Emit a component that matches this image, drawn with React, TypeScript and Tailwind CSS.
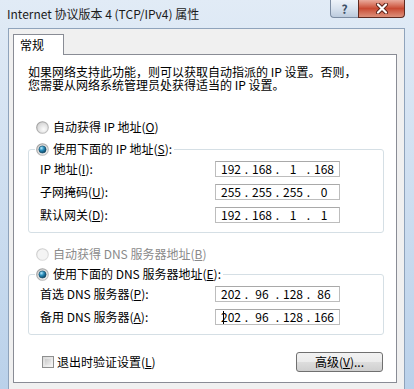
import React from "react";

type RadioProps = { checked?: boolean; disabled?: boolean };

const Radio = ({ checked, disabled }: RadioProps) => (
  <svg width="13" height="13" viewBox="0 0 13 13" className="shrink-0">
    <defs>
      <linearGradient id="rb-ring" x1="0" y1="0" x2="1" y2="1">
        <stop offset="0" stopColor="#9a9a9a" />
        <stop offset="1" stopColor="#c4c4c4" />
      </linearGradient>
      <linearGradient id="rb-ring-dis" x1="0" y1="0" x2="1" y2="1">
        <stop offset="0" stopColor="#c8c8c8" />
        <stop offset="1" stopColor="#e0e0e0" />
      </linearGradient>
      <radialGradient id="rb-fill" cx="0.6" cy="0.65" r="0.6">
        <stop offset="0" stopColor="#fcfcfc" />
        <stop offset="1" stopColor="#d6d6d6" />
      </radialGradient>
      <radialGradient id="rb-dot" cx="0.35" cy="0.3" r="0.75">
        <stop offset="0" stopColor="#b8ecff" />
        <stop offset="0.45" stopColor="#2a8dbb" />
        <stop offset="1" stopColor="#0b3f5c" />
      </radialGradient>
    </defs>
    <circle
      cx="6.5"
      cy="6.5"
      r="5.8"
      fill={disabled ? "#f4f4f4" : "url(#rb-fill)"}
      stroke={disabled ? "url(#rb-ring-dis)" : "url(#rb-ring)"}
      strokeWidth="1.1"
    />
    {checked && <circle cx="6.5" cy="6.5" r="3.6" fill="url(#rb-dot)" stroke="#0e4763" strokeWidth="0.6" />}
  </svg>
);

const IpField = ({ parts, caret }: { parts: string[]; caret?: boolean }) => (
  <div className="relative flex items-center w-[125px] h-[16px] border border-[#bdbdbd] border-t-[#a9a9a9] bg-white pl-[2px] leading-[14px]">
    {caret && <span className="absolute left-[7px] top-[1px] w-px h-[13px] bg-black" />}
    {parts.map((p, i) => (
      <React.Fragment key={i}>
        <span className="w-[26px] text-center">{p}</span>
        {i < 3 && <span className="w-[5px] text-center">.</span>}
      </React.Fragment>
    ))}
  </div>
);

const Row = ({ label, children }: { label: React.ReactNode; children: React.ReactNode }) => (
  <div className="grid grid-cols-[175px_125px] items-center h-[16px]">
    <span className="whitespace-nowrap leading-[16px]">{label}</span>
    {children}
  </div>
);

const Key = ({ k }: { k: string }) => <u className="underline-offset-[1px]">{k}</u>;

const App = () => {
  return (
    <div className="w-[414px] h-[389px] overflow-hidden flex flex-col bg-gradient-to-b from-[#e1ebf6] to-[#bad1ea] font-['Noto_Sans_CJK_SC',sans-serif] text-[12px] text-black">
      {/* title bar */}
      <div className="h-[28px] shrink-0 flex items-start justify-between pl-[7px] pr-[9px]">
        <div className="mt-[6px] leading-[16px] text-[#1b1b1b] whitespace-nowrap">Internet 协议版本 4 (TCP/IPv4) 属性</div>
        <div className="flex">
          <div className="w-[28px] h-[18px] flex items-center justify-center border border-t-0 border-r-0 border-[#7c8ca2] rounded-bl-[4px] bg-gradient-to-b from-[#eef3f9] via-[#d8e2ee] to-[#bccbdd] text-[#3c4f66] text-[12px] font-bold leading-none">
            ?
          </div>
          <div className="w-[47px] h-[18px] flex items-center justify-center border border-t-0 border-[#5f2a20] rounded-br-[4px] bg-gradient-to-b from-[#e9aa9c] via-[#c84a33] to-[#dc8f7a]">
            <svg width="14" height="11" viewBox="0 0 14 11">
              <path d="M3 1.5 L11 9.5 M11 1.5 L3 9.5" stroke="#5a2118" strokeWidth="4" strokeLinecap="round" />
              <path d="M3 1.5 L11 9.5 M11 1.5 L3 9.5" stroke="#ffffff" strokeWidth="2.2" strokeLinecap="round" />
            </svg>
          </div>
        </div>
      </div>

      {/* client area */}
      <div className="flex-1 ml-[8px] mr-[9px] border-l border-t border-r border-[#8fa3bb] bg-[#f0f0f0] pt-[5px] pl-[4px] pr-[7px]">
        <div className="flex">
          <div className="relative z-10 -mb-px w-[51px] h-[21px] border border-b-0 border-[#898c95] bg-white pl-[6px] leading-[20px]">
            常规
          </div>
        </div>
        <div className="h-[329px] border border-[#898c95] bg-white pl-[14px] pr-[12px]">
          <p className="mt-[10px] leading-[13px] whitespace-nowrap">
            如果网络支持此功能，则可以获取自动指派的 IP 设置。否则，
            <br />
            您需要从网络系统管理员处获得适当的 IP 设置。
          </p>

          <div className="mt-[28px] ml-[8px] h-[16px] flex items-center gap-[4px] whitespace-nowrap">
            <Radio />
            <span>自动获得 IP 地址(<Key k="O" />)</span>
          </div>

          <fieldset className="mt-[6px] border border-[#d5dfe5] rounded-[3px]">
            <legend className="ml-[6px] pl-[1px] pr-[2px] h-[16px] flex items-center gap-[4px] whitespace-nowrap">
              <Radio checked />
              <span>使用下面的 IP 地址(<Key k="S" />):</span>
            </legend>
            <div className="pl-[11px] pt-[4px] pb-[9px] flex flex-col gap-[7px]">
              <Row label={<>IP 地址(<Key k="I" />):</>}>
                <IpField parts={["192", "168", "1", "168"]} />
              </Row>
              <Row label={<>子网掩码(<Key k="U" />):</>}>
                <IpField parts={["255", "255", "255", "0"]} />
              </Row>
              <Row label={<>默认网关(<Key k="D" />):</>}>
                <IpField parts={["192", "168", "1", "1"]} />
              </Row>
            </div>
          </fieldset>

          <div className="mt-[13px] ml-[8px] h-[16px] flex items-center gap-[4px] whitespace-nowrap text-[#8a8a8a]">
            <Radio disabled />
            <span>自动获得 DNS 服务器地址(<Key k="B" />)</span>
          </div>

          <fieldset className="mt-[4px] border border-[#d5dfe5] rounded-[3px]">
            <legend className="ml-[6px] pl-[1px] pr-[2px] h-[16px] flex items-center gap-[4px] whitespace-nowrap">
              <Radio checked />
              <span>使用下面的 DNS 服务器地址(<Key k="E" />):</span>
            </legend>
            <div className="pl-[11px] pt-[4px] pb-[9px] flex flex-col gap-[7px]">
              <Row label={<>首选 DNS 服务器(<Key k="P" />):</>}>
                <IpField parts={["202", "96", "128", "86"]} />
              </Row>
              <Row label={<>备用 DNS 服务器(<Key k="A" />):</>}>
                <IpField parts={["202", "96", "128", "166"]} caret />
              </Row>
            </div>
          </fieldset>

          <div className="mt-[17px] h-[20px] flex items-center justify-between">
            <div className="ml-[14px] flex items-center gap-[3px] whitespace-nowrap">
              <span className="w-[12px] h-[12px] border border-[#8e8f8f] bg-gradient-to-br from-[#d9d9d9] to-[#f7f7f7] p-[2px]">
                <span className="block w-full h-full bg-gradient-to-br from-[#cbcbcb] to-[#eeeeee]" />
              </span>
              <span>退出时验证设置(<Key k="L" />)</span>
            </div>
            <button className="mr-[1px] w-[87px] h-[20px] border border-[#707070] rounded-[3px] bg-[linear-gradient(to_bottom,#f2f2f2_0%,#ebebeb_50%,#dddddd_50%,#cfcfcf_100%)] leading-[18px] text-black">
              高级(<Key k="V" />)...
            </button>
          </div>
        </div>
      </div>
    </div>
  );
};

export default App;
